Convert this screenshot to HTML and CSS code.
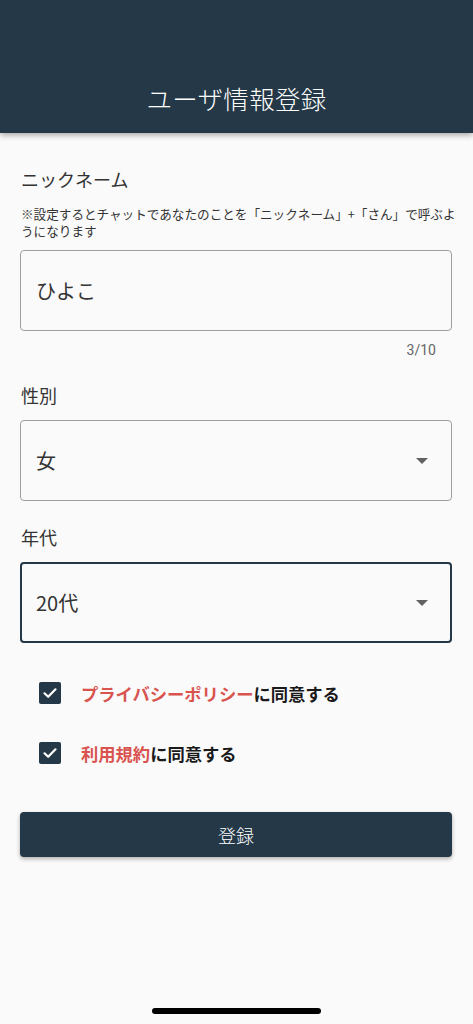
FILE: index.html
```html
<!DOCTYPE html>
<html lang="ja">
<head>
<meta charset="utf-8" />
<title>ユーザ情報登録</title>
<link rel="stylesheet" href="styles.css">
</head>
<body>
<div id="header">
	<h1 class="title">ユーザ情報登録</h1>
</div>

<div id="form">
	<div class="label">ニックネーム</div>
	<p class="note">※設定するとチャットであなたのことを「ニックネーム」+「さん」で呼ぶようになります</p>
	<div class="field field-input">ひよこ</div>
	<div class="counter">3/10</div>

	<div class="label label-gap">性別</div>
	<div class="field field-select">
		<span>女</span>
		<span class="arrow"></span>
	</div>

	<div class="label label-gap">年代</div>
	<div class="field field-select focused">
		<span>20代</span>
		<span class="arrow"></span>
	</div>

	<div class="agree agree-first">
		<span class="check">
			<svg width="16" height="16" viewBox="0 0 16 16"><path d="M2.5 8.3 L6.2 11.8 L13.5 4.3" fill="none" stroke="#ffffff" stroke-width="2.2" stroke-linecap="round" stroke-linejoin="round"/></svg>
		</span>
		<span class="agree-text"><span class="link">プライバシーポリシー</span>に同意する</span>
	</div>
	<div class="agree">
		<span class="check">
			<svg width="16" height="16" viewBox="0 0 16 16"><path d="M2.5 8.3 L6.2 11.8 L13.5 4.3" fill="none" stroke="#ffffff" stroke-width="2.2" stroke-linecap="round" stroke-linejoin="round"/></svg>
		</span>
		<span class="agree-text"><span class="link">利用規約</span>に同意する</span>
	</div>

	<a href="#" class="button">登録</a>
</div>

<div id="home"></div>
</body>
</html>
```

FILE: styles.css
```css
body {
	margin:0;
	padding:0;
	background:#fafafa;
	font-family:"Noto Sans CJK JP", "Noto Sans", sans-serif;
	color:#333333;
	min-height:1024px;
	position:relative;}
#header {
	height:133px;
	background:#243847;
	box-shadow:0 2px 6px rgba(0,0,0,0.35);
	display:flex;
	align-items:flex-end;
	justify-content:center;}
.title {
	margin:0 0 18px;
	font-size:25.5px;
	line-height:34px;
	font-weight:300;
	color:#ffffff;
	letter-spacing:0.3px;}
#form {
	padding:34px 21px 0 20px;}
.label {
	font-size:18px;
	line-height:24px;
	color:#333333;
	padding-left:1px;}
.label-gap {margin-top:24px;}
.note {
	margin:14px -6px 0 0;
	padding-left:1px;
	font-size:12.6px;
	line-height:17px;
	color:#333333;}
.field {
	box-sizing:border-box;
	height:81px;
	border:1px solid #9e9e9e;
	border-radius:4px;
	padding:0 0 0 15px;
	font-size:20px;
	color:#333333;
	display:flex;
	align-items:center;}
.field-input {margin-top:11px;}
.field-select {
	margin-top:13px;
	justify-content:space-between;
	padding-right:23px;}
.field-select.focused {
	margin-top:13px;
	border:2px solid #243847;
	padding-left:14px;
	padding-right:22px;}
.arrow {
	width:0;
	height:0;
	border-left:6px solid transparent;
	border-right:6px solid transparent;
	border-top:6px solid #616161;}
.counter {
	margin-top:10px;
	text-align:right;
	padding-right:16px;
	font-family:Roboto, sans-serif;
	font-size:14px;
	line-height:18px;
	color:#666666;}
.agree {
	display:flex;
	align-items:center;
	padding-left:19px;
	margin-top:38px;
	height:22px;}
.agree-first {margin-top:39px;}
.check {
	width:22px;
	height:22px;
	border-radius:2px;
	background:#243847;
	display:flex;
	align-items:center;
	justify-content:center;
	flex-shrink:0;}
.agree-text {
	margin-left:20px;
	font-size:17.3px;
	font-weight:bold;
	color:#1a1a1a;}
.link {color:#d9534f;}
.button {
	display:flex;
	align-items:center;
	justify-content:center;
	margin-top:48px;
	height:45px;
	border-radius:4px;
	background:#243847;
	box-shadow:0 2px 4px rgba(0,0,0,0.3);
	color:#ffffff;
	font-size:18px;
	font-weight:300;
	text-decoration:none;}
#home {
	position:absolute;
	left:152px;
	top:1008px;
	width:169px;
	height:6px;
	border-radius:3px;
	background:#000000;}
```
